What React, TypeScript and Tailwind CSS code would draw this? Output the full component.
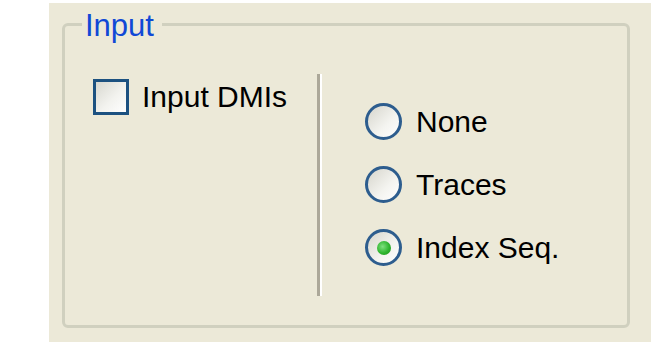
const FONT = "font-['Liberation_Sans',Arial,sans-serif]";

const RADIOS = [
  { label: "None", checked: false },
  { label: "Traces", checked: false },
  { label: "Index Seq.", checked: true },
];

function Radio({ checked }: { checked: boolean }) {
  return (
    <span className="flex h-[37px] w-[37px] shrink-0 items-center justify-center rounded-full border-[3px] border-[#2d5d8e] bg-[linear-gradient(135deg,#d6d5cc_0%,#f4f4f0_60%,#ffffff_100%)]">
      {checked && (
        <span className="h-[14px] w-[14px] rounded-full bg-[radial-gradient(circle_at_40%_40%,#7fe07f_0%,#2fb52f_55%,#1c8f1c_100%)]" />
      )}
    </span>
  );
}

export default function App() {
  return (
    <div className={`h-[358px] w-[668px] bg-white pt-[3px] pl-[49px] ${FONT}`}>
      <div className="h-[339px] w-[602px] bg-[#ECE9D8] pt-[2px] pl-[13px]">
        <fieldset className="h-[323px] w-[568px] rounded-[6px] border-[3px] border-[#D0D0BF]">
          <legend className="ml-[17px] pt-[4px] pr-[8px] pl-[3px] text-[31px] leading-[34px] text-[#1048d6]">Input</legend>
          <div className="flex items-start pt-[31px] text-[30px] text-black">
            <div className="w-[252px] pt-[5px] pl-[28px]">
              <label className="flex h-[36px] items-center gap-[13px]">
                <span className="h-[36px] w-[36px] shrink-0 border-[3px] border-[#1C5180] bg-[linear-gradient(135deg,#d8d8d0_0%,#f2f2ee_55%,#ffffff_100%)]" />
                <span className="leading-none">Input DMIs</span>
              </label>
            </div>
            <div className="h-[222px] w-[5px] border-l-[3px] border-r-[2px] border-l-[#ACA899] border-r-white" />
            <div className="flex flex-col pt-[16px] pl-[43px]">
              {RADIOS.map((r) => (
                <label key={r.label} className="flex h-[63px] items-center gap-[14px]">
                  <Radio checked={r.checked} />
                  <span className="leading-none">{r.label}</span>
                </label>
              ))}
            </div>
          </div>
        </fieldset>
      </div>
    </div>
  );
}
